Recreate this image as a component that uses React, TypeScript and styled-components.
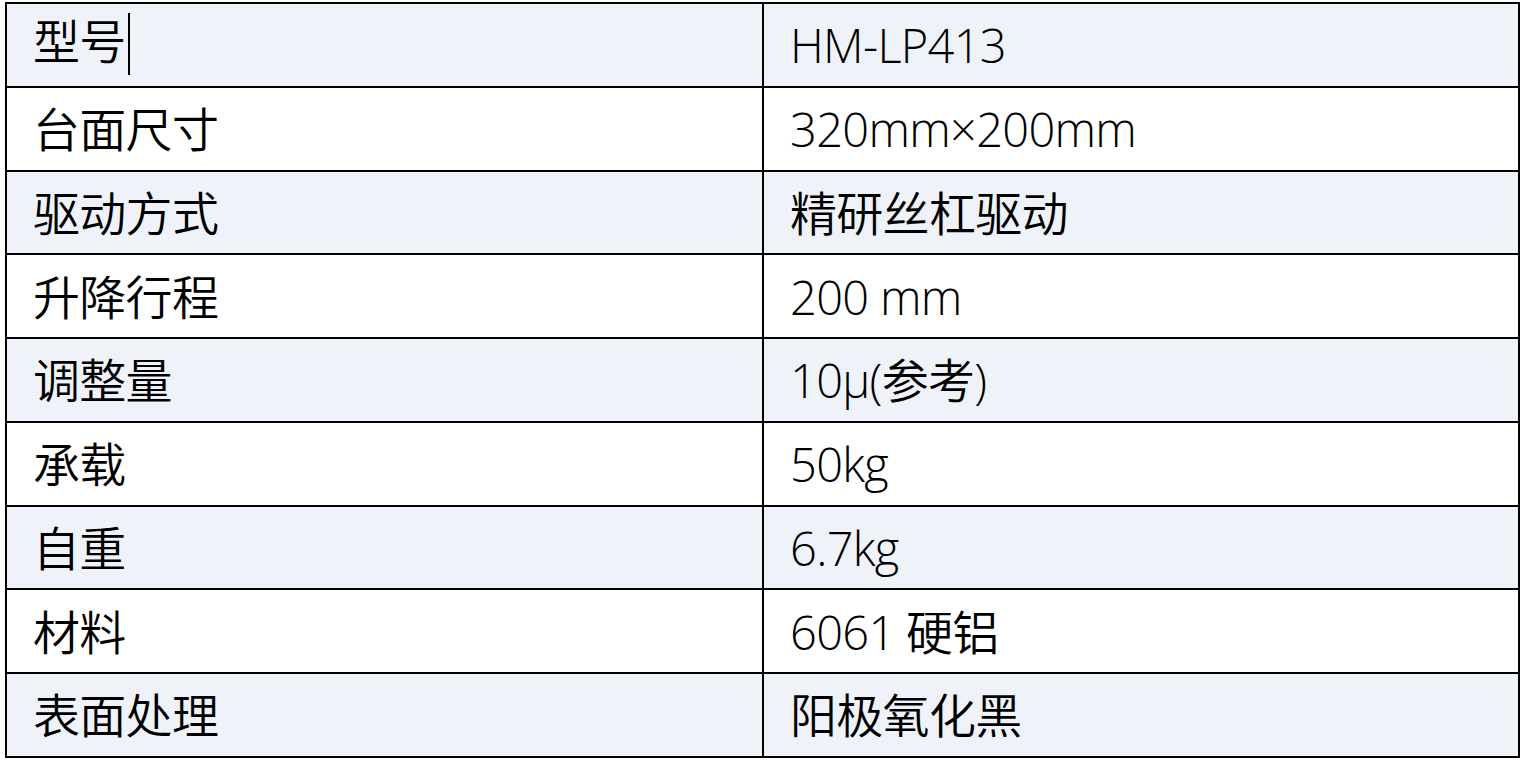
import React from 'react';
import styled, { createGlobalStyle } from 'styled-components';

const GlobalStyle = createGlobalStyle`
  html, body {
    margin: 0;
    padding: 0;
    background: #ffffff;
  }
  body {
    font-family: "Open Sans", "Noto Sans CJK SC", sans-serif;
  }
`;

const Page = styled.div`
  padding: 2px 0 0 5px;
`;

const SpecTable = styled.table`
  width: 1515px;
  border-collapse: collapse;
  table-layout: fixed;
  border: 2px solid #000;
`;

const Row = styled.tr<{ $shaded: boolean }>`
  height: 83.75px;
  background: ${p => (p.$shaded ? '#eff3f9' : '#ffffff')};
`;

const Cell = styled.td`
  border: 2px solid #000;
  padding: 2px 0 0 26px;
  font-size: 47px;
  font-weight: 350;
  letter-spacing: -0.7px;
  line-height: 1;
  color: #000;
  vertical-align: middle;
  white-space: nowrap;
`;

const Caret = styled.span`
  display: inline-block;
  width: 2px;
  height: 62px;
  margin-left: 2px;
  background: #000;
  vertical-align: middle;
  position: relative;
  top: -2px;
`;

const specs: [string, string][] = [
  ['型号', 'HM-LP413'],
  ['台面尺寸', '320mm×200mm'],
  ['驱动方式', '精研丝杠驱动'],
  ['升降行程', '200 mm'],
  ['调整量', '10μ(参考)'],
  ['承载', '50kg'],
  ['自重', '6.7kg'],
  ['材料', '6061 硬铝'],
  ['表面处理', '阳极氧化黑'],
];

export default function App() {
  return (
    <>
      <GlobalStyle />
      <Page>
        <SpecTable>
          <colgroup>
            <col style={{ width: 757 }} />
            <col />
          </colgroup>
          <tbody>
            {specs.map(([name, value], i) => (
              <Row key={name} $shaded={i % 2 === 0}>
                <Cell>
                  {name}
                  {i === 0 && <Caret />}
                </Cell>
                <Cell>{value}</Cell>
              </Row>
            ))}
          </tbody>
        </SpecTable>
      </Page>
    </>
  );
}
